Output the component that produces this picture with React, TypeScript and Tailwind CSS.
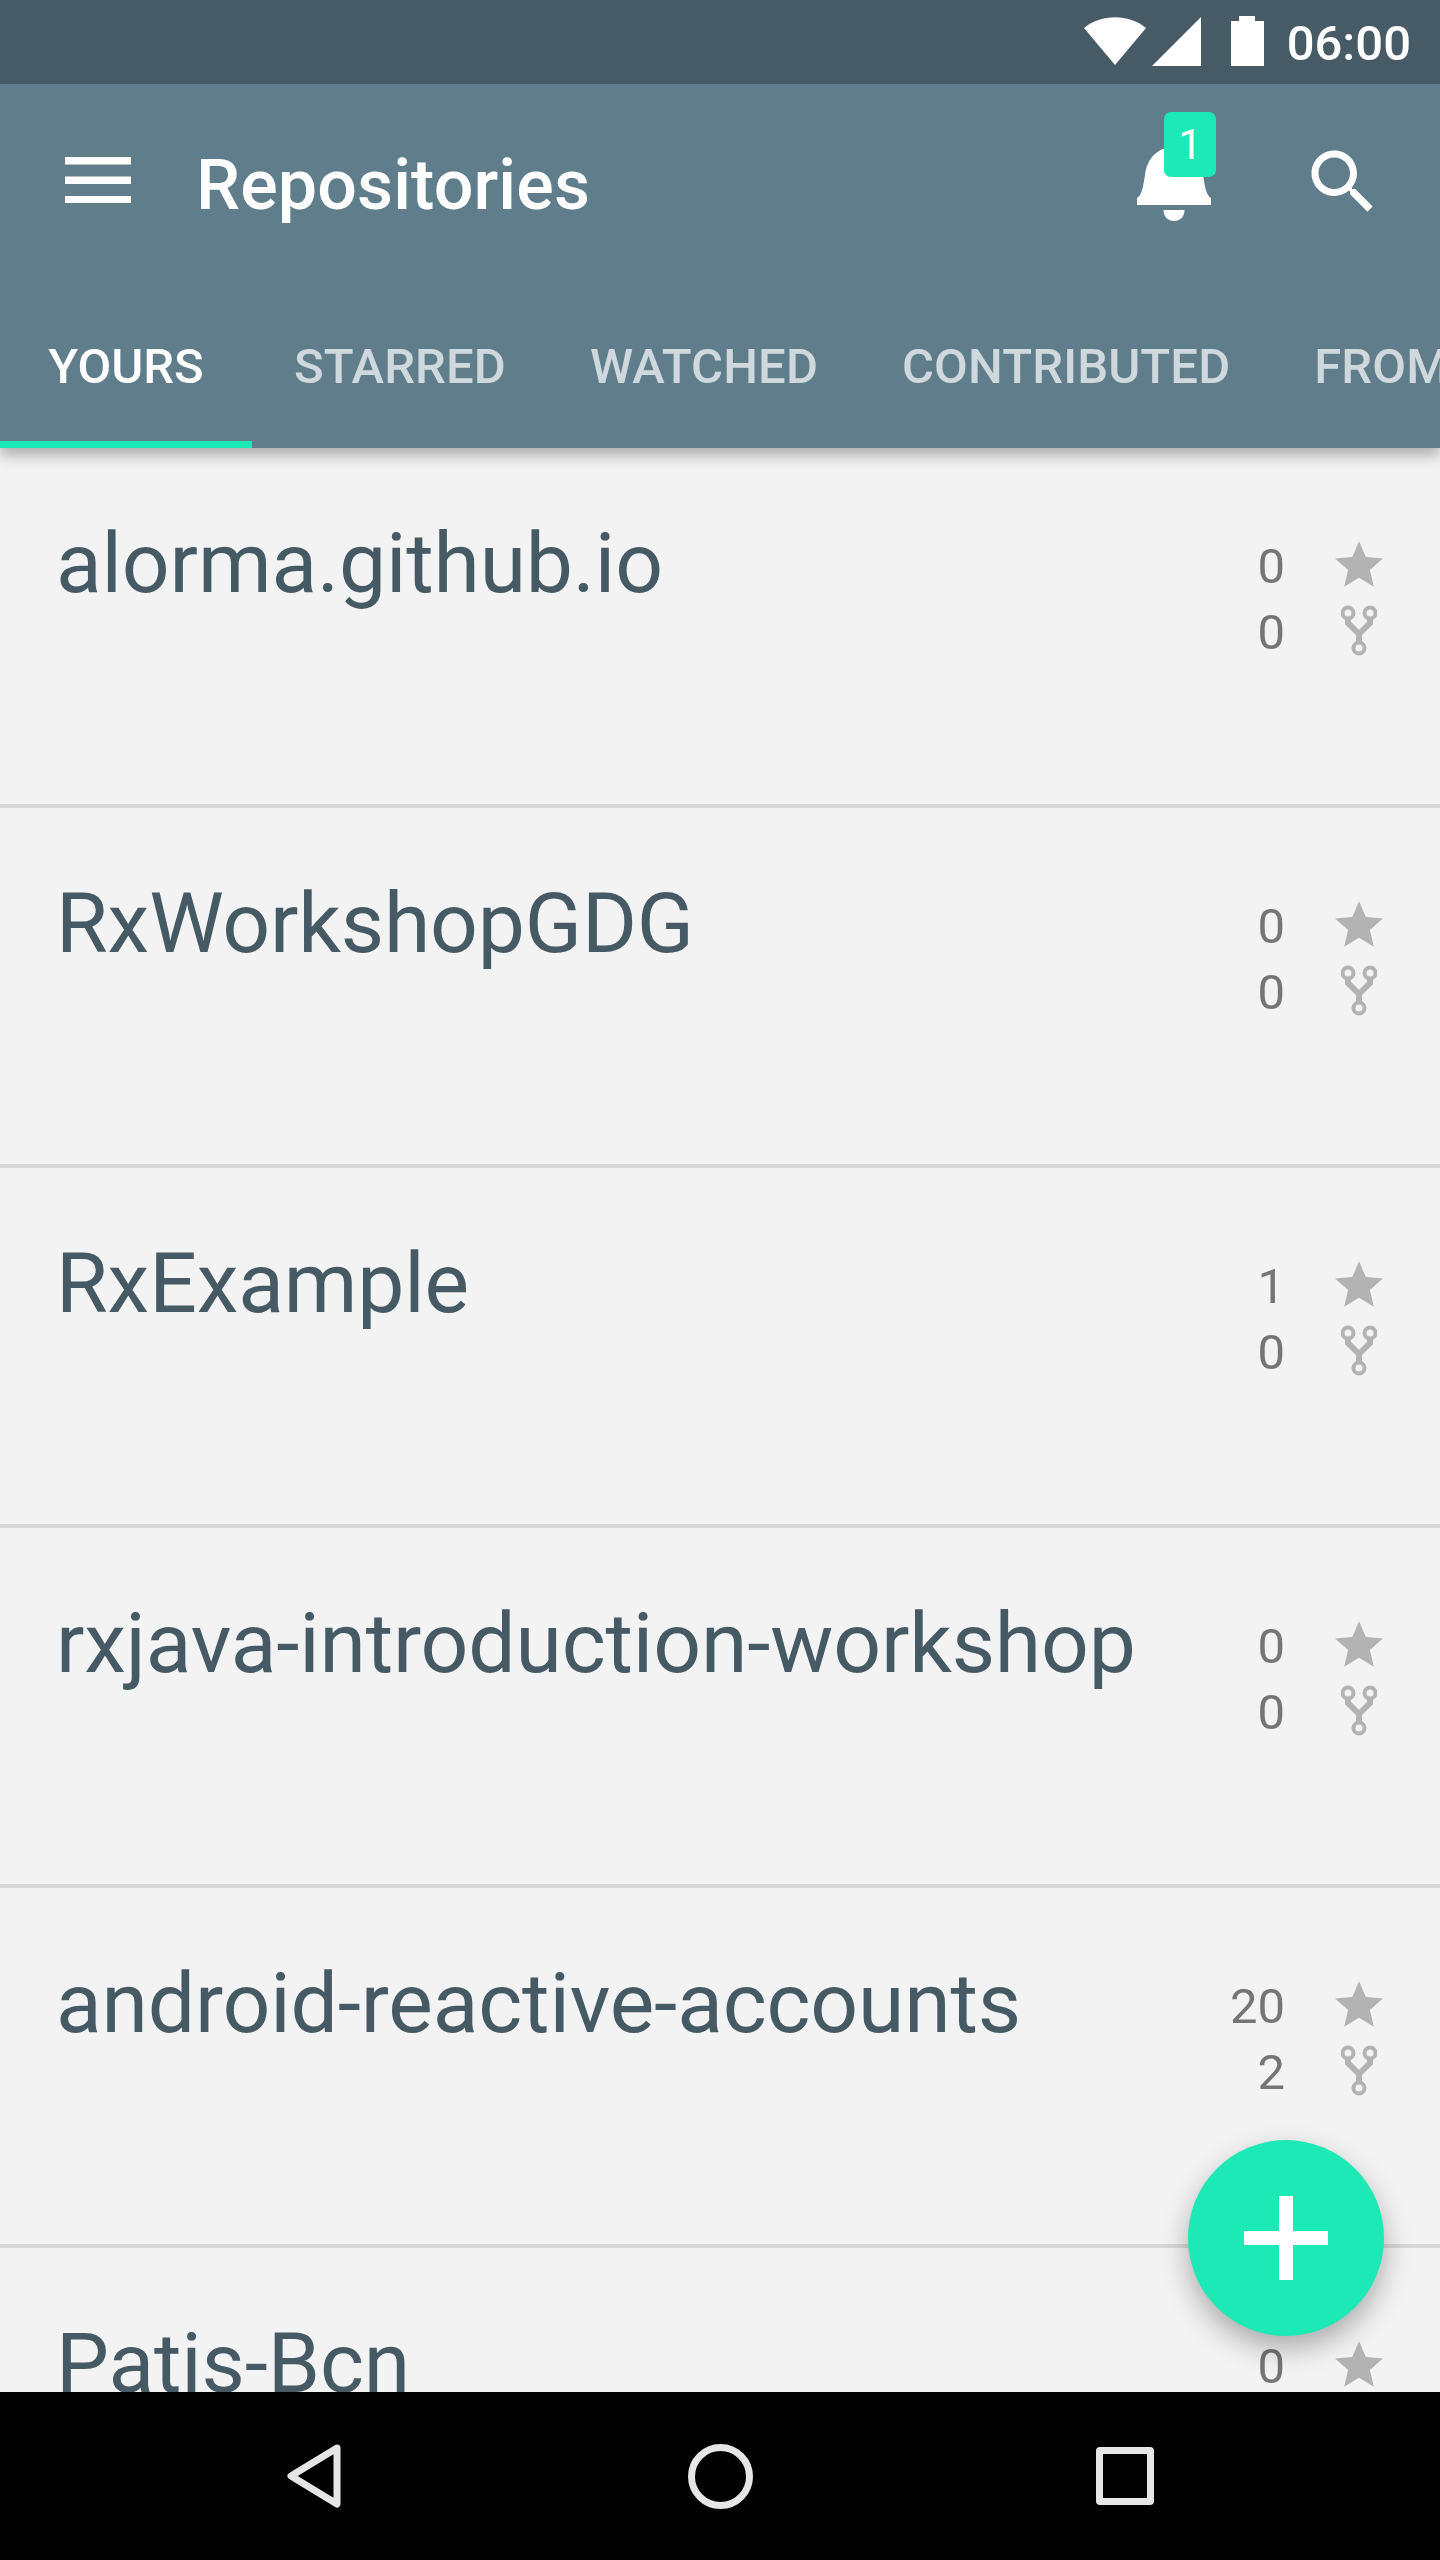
const repos = [
  { name: "alorma.github.io", stars: 0, forks: 0 },
  { name: "RxWorkshopGDG", stars: 0, forks: 0 },
  { name: "RxExample", stars: 1, forks: 0 },
  { name: "rxjava-introduction-workshop", stars: 0, forks: 0 },
  { name: "android-reactive-accounts", stars: 20, forks: 2 },
  { name: "Patis-Bcn", stars: 0, forks: 0 },
];

function Star() {
  return (
    <svg width="48" height="46" viewBox="2 2 20 19" className="block" fill="#b3b3b3">
      <path d="M12 17.27L18.18 21l-1.64-7.03L22 9.24l-7.19-.61L12 2 9.19 8.63 2 9.24l5.46 4.73L5.82 21z" />
    </svg>
  );
}

function Fork() {
  return (
    <svg width="36" height="52" viewBox="0 0 36 52" className="block" fill="none" stroke="#b3b3b3">
      <circle cx="7" cy="9" r="5.500" strokeWidth="4" />
      <circle cx="29" cy="9" r="5.500" strokeWidth="4" />
      <circle cx="18" cy="44" r="5.500" strokeWidth="4" />
      <path d="M7 15v4l11 11v8M29 15v4L18 30" strokeWidth="6" />
    </svg>
  );
}

function Stat({ value, icon }: { value: number; icon: React.ReactNode }) {
  return (
    <div className="flex h-[66px] items-center justify-end">
      <span className="text-[49px] leading-[66px] text-[#757575]">{value}</span>
      <span className="-mt-[6px] ml-[50px] flex w-[48px] justify-center">{icon}</span>
    </div>
  );
}

function Row({ name, stars, forks }: { name: string; stars: number; forks: number }) {
  return (
    <div className="flex h-[360px] shrink-0 justify-between border-b-4 border-[#d8d8d8] pl-[56px] pr-[57px]">
      <div className="pt-[66px] text-[84px] leading-[100px] tracking-[-0.15px] text-[#455a64]">{name}</div>
      <div className="pt-[86px]">
        <Stat value={stars} icon={<Star />} />
        <Stat value={forks} icon={<Fork />} />
      </div>
    </div>
  );
}

export default function App() {
  const tabs = ["STARRED", "WATCHED", "CONTRIBUTED", "FROM ME"];
  return (
    <div className="relative flex h-[2560px] w-[1440px] flex-col overflow-hidden bg-[#f3f3f3] font-['Roboto',sans-serif]">
      <div className="relative z-10 shadow-[0_7px_14px_rgba(0,0,0,0.3)]">
        <div className="flex h-[84px] items-center justify-end bg-[#475b66] pr-[29px] text-white">
          <svg width="62" height="48" viewBox="0 0 62 48" className="-mt-[2px] block" fill="#fff">
            <path d="M0 11C17-3.500 45-3.500 62 11L31 48Z" />
          </svg>
          <svg width="49" height="49" viewBox="0 0 49 49" className="-mt-[2px] ml-[6px] block" fill="#fff">
            <path d="M0 49L49 0V49Z" />
          </svg>
          <svg width="33" height="50" viewBox="0 0 33 50" className="-mt-[2px] ml-[30px] block" fill="#fff">
            <path d="M8 0h16v5h9v45H0V5h8z" />
          </svg>
          <span className="ml-[23px] pt-[4px] text-[49px] font-medium leading-[78px]">06:00</span>
        </div>
        <div className="bg-[#607d8b]">
          <div className="flex h-[196px] items-center pl-[65px] pr-[55px]">
            <svg width="66" height="46" viewBox="0 0 66 46" className="-mt-[4px] block" fill="#fff">
              <rect y="0" width="66" height="7.500" />
              <rect y="19.500" width="66" height="7.500" />
              <rect y="39" width="66" height="7.500" />
            </svg>
            <div className="ml-[65px] pt-[6px] text-[70px] font-medium leading-[84px] tracking-[0.1px] text-white">Repositories</div>
            <div className="relative -mt-[14px] ml-auto h-[100px] w-[90px]">
              <svg width="90" height="100" viewBox="0 0 90 100" className="block" fill="#fff">
                <path d="M7 80H81V73C76 70 75 62 73 50C71 33 60 22 44 22C28 22 17 33 15 50C13 62 12 70 7 73Z" />
                <path d="M33.500 85H54.500C54.500 92 50 96 44 96C38 96 33.500 92 33.500 85Z" />
              </svg>
              <div className="absolute left-[34px] -top-[13px] flex h-[65px] w-[52px] items-center justify-center rounded-[7px] bg-[#1de9b6] text-[42px] leading-none text-white">
                1
              </div>
            </div>
            <svg width="84" height="84" viewBox="0 0 24 24" className="ml-[81px] block" fill="#fff">
              <path d="M15.500 14h-.79l-.28-.27C15.410 12.590 16 11.110 16 9.500 16 5.910 13.090 3 9.500 3S3 5.910 3 9.500 5.910 16 9.500 16c1.610 0 3.090-.59 4.230-1.570l.27.28v.79l5 4.990L20.490 19l-4.990-5zm-6 0C7.010 14 5 11.990 5 9.500S7.010 5 9.500 5 14 7.010 14 9.500 11.990 14 9.500 14z" />
            </svg>
          </div>
          <div className="flex h-[168px] overflow-hidden text-[49px] font-medium leading-none whitespace-nowrap">
            <div className="flex w-[252px] shrink-0 items-center justify-center border-b-[7px] border-[#1de9b6] pt-[11px] text-white">
              YOURS
            </div>
            <div className="flex tracking-[0.12px]">
              {tabs.map((t) => (
                <div key={t} className="flex shrink-0 items-center px-[42px] pb-[7px] pt-[11px] text-white/70">
                  {t}
                </div>
              ))}
            </div>
          </div>
        </div>
      </div>

      <div className="flex min-h-0 flex-1 flex-col overflow-hidden">
        {repos.map((r) => (
          <Row key={r.name} {...r} />
        ))}
      </div>

      <div className="relative z-10 flex h-[168px] shrink-0 items-center justify-center bg-black">
        <div className="flex w-[405px] justify-center">
          <svg width="60" height="68" viewBox="0 0 60 68" className="block" fill="none" stroke="#e6e6e6" strokeWidth="7" strokeLinejoin="round">
            <path d="M52 6L6 34L52 62Z" />
          </svg>
        </div>
        <div className="flex w-[405px] justify-center">
          <div className="h-[65px] w-[65px] rounded-full border-[7px] border-[#e6e6e6]" />
        </div>
        <div className="flex w-[405px] justify-center">
          <div className="h-[58px] w-[58px] rounded-[4px] border-[7px] border-[#e6e6e6]" />
        </div>
      </div>

      <div className="absolute bottom-[224px] right-[56px] z-20 flex h-[196px] w-[196px] items-center justify-center rounded-full bg-[#1de9b6] shadow-[0_12px_28px_rgba(0,0,0,0.3)]">
        <svg width="84" height="84" viewBox="0 0 84 84" className="block" fill="#fff">
          <rect x="35" width="14" height="84" />
          <rect y="35" width="84" height="14" />
        </svg>
      </div>
    </div>
  );
}
